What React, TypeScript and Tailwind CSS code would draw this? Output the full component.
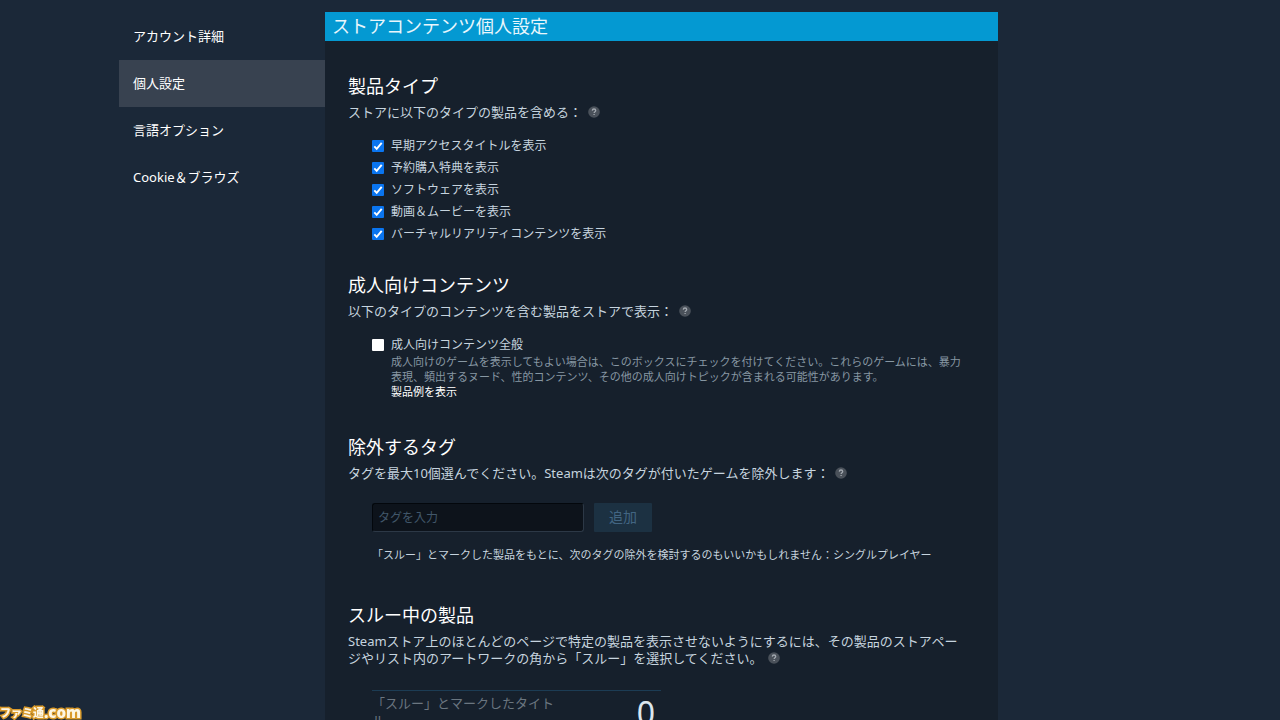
import { ReactNode } from "react";

function Help({ label }: { label: string }) {
  return (
    <button type="button" aria-label={label} className="ml-1.5 inline-block size-3 align-[-1px]">
      <svg viewBox="0 0 12 12" className="block size-3" aria-hidden="true">
        <circle cx="6" cy="6" r="5.8" fill="#4a515a" />
        <path
          d="M4.3 4.6C4.4 3.5 5.1 3 6 3c1 0 1.7.6 1.7 1.5 0 1.2-1.6 1.2-1.6 2.5M6.1 8v1.1"
          fill="none"
          stroke="#a3a9b0"
          strokeWidth="1.3"
        />
      </svg>
    </button>
  );
}

function Section({ title, text, help, children }: { title: string; text: string; help: string; children: ReactNode }) {
  return (
    <section>
      <h2 className="text-[18px] leading-6 text-white">{title}</h2>
      <p className="mt-1.5 text-[13px] leading-[17px] text-[#c6d4df]">
        {text}
        <Help label={help} />
      </p>
      {children}
    </section>
  );
}

function Tick({ id, label, checked }: { id: string; label: string; checked?: boolean }) {
  return (
    <div className="flex h-[22px] items-center">
      <span className="grid size-3">
        <input
          id={id}
          type="checkbox"
          defaultChecked={checked}
          className="peer col-start-1 row-start-1 size-3 appearance-none rounded-[1px] bg-white checked:bg-[#0a75f0]"
        />
        <svg
          viewBox="0 0 12 12"
          className="pointer-events-none invisible col-start-1 row-start-1 size-3 peer-checked:visible"
          aria-hidden="true"
        >
          <path d="M2.3 6.3 4.7 8.8 9.7 2.8" fill="none" stroke="#fff" strokeWidth="1.9" />
        </svg>
      </span>
      <label htmlFor={id} className="pl-[7px] text-[12px] leading-[18px] text-[#c6d4df]">
        {label}
      </label>
    </div>
  );
}

const nav = ["アカウント詳細", "個人設定", "言語オプション", "Cookie＆ブラウズ"];
const types = [
  "早期アクセスタイトルを表示",
  "予約購入特典を表示",
  "ソフトウェアを表示",
  "動画＆ムービーを表示",
  "バーチャルリアリティコンテンツを表示",
];

export default function App() {
  return (
    <div className="h-screen overflow-hidden bg-[#1b2838] pt-3 pl-[119px] font-['Noto_Sans','Noto_Sans_CJK_JP',sans-serif]">
      <div className="flex max-w-[879px]">
        <nav className="w-[206px] shrink-0 pt-px">
          {nav.map((item, i) => (
            <a
              key={item}
              href="#"
              aria-current={i === 1 ? "page" : undefined}
              className="flex h-[47px] items-center px-3.5 pb-px text-[13px] leading-[18px] text-white aria-[current=page]:bg-[#384250]"
            >
              {item}
            </a>
          ))}
        </nav>
        <main className="min-h-screen min-w-0 flex-1 bg-[#16202c]">
          <h1 className="bg-[#0499d2] px-[7px] text-[18px] leading-[29px] text-[#e8f6fc]">ストアコンテンツ個人設定</h1>
          <div className="pt-[33px] pr-8 pl-[23px]">
            <Section title="製品タイプ" text="ストアに以下のタイプの製品を含める：" help="製品タイプのヘルプ">
              <div className="mt-3.5 pl-6">
                {types.map((t, i) => (
                  <Tick key={t} id={`type-${i}`} label={t} checked />
                ))}
              </div>
            </Section>
            <div className="mt-7">
              <Section
                title="成人向けコンテンツ"
                text="以下のタイプのコンテンツを含む製品をストアで表示："
                help="成人向けコンテンツのヘルプ"
              >
                <div className="mt-3.5 pl-6">
                  <Tick id="adult" label="成人向けコンテンツ全般" />
                  <div className="-mt-0.5 pl-[19px] text-[11px] leading-[15px] text-[#8797a3]">
                    <p>
                      成人向けのゲームを表示してもよい場合は、このボックスにチェックを付けてください。これらのゲームには、暴力
                      <br />
                      表現、頻出するヌード、性的コンテンツ、その他の成人向けトピックが含まれる可能性があります。
                    </p>
                    <a href="#" className="block text-white">
                      製品例を表示
                    </a>
                  </div>
                </div>
              </Section>
            </div>
            <div className="mt-9">
              <Section
                title="除外するタグ"
                text="タグを最大10個選んでください。Steamは次のタグが付いたゲームを除外します："
                help="除外するタグのヘルプ"
              >
                <form className="mt-[21px] flex gap-2.5 pl-6" onSubmit={(e) => e.preventDefault()}>
                  <input
                    type="text"
                    aria-label="タグを入力"
                    placeholder="タグを入力"
                    className="h-[29px] w-[212px] rounded-[3px] border border-[#03070c] border-r-[#2c3846] border-b-[#2c3846] bg-[#0d131b] px-[5px] text-[12px] text-white placeholder:text-[#41576a]"
                  />
                  <button type="submit" className="h-[29px] w-[58px] rounded-[1px] bg-[#1c3142] pb-0.5 text-[14px] leading-5 text-[#426582]">
                    追加
                  </button>
                </form>
                <p className="mt-3.5 pl-6 text-[11px] leading-[17px] text-[#c6d4df]">
                  「スルー」とマークした製品をもとに、次のタグの除外を検討するのもいいかもしれません：シングルプレイヤー
                </p>
              </Section>
            </div>
            <div className="mt-10">
              <Section
                title="スルー中の製品"
                text="Steamストア上のほとんどのページで特定の製品を表示させないようにするには、その製品のストアページやリスト内のアートワークの角から「スルー」を選択してください。"
                help="スルー中の製品のヘルプ"
              >
                <div className="mt-[23px] ml-6 flex w-[289px] justify-between border-t border-[#1c3c54] pt-1 pr-1.5">
                  <p className="w-[190px] text-[13px] leading-[17px] text-[#6b7680]">「スルー」とマークしたタイトル</p>
                  <span className="mt-0.5 text-[32px] leading-8">
                    <span className="text-[#dce6ee]">0</span>
                  </span>
                </div>
              </Section>
            </div>
          </div>
        </main>
      </div>
      <div className="fixed bottom-0 left-0 flex items-center leading-[15px] font-black text-[#fdf6e4] [-webkit-text-stroke:3px_#d99a2b] [paint-order:stroke_fill]">
        <span className="text-[11px]">ファミ通</span>
        <span className="text-[15px]">.com</span>
      </div>
    </div>
  );
}
